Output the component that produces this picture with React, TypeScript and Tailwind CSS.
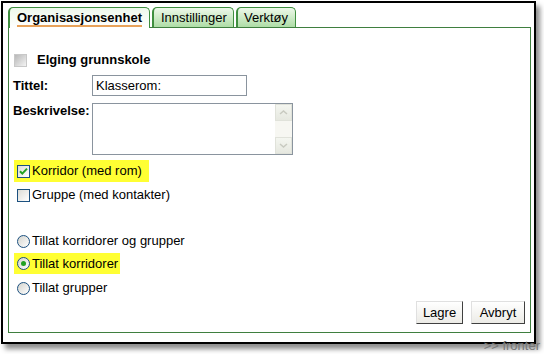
import React from "react";

function Check({ checked }: { checked?: boolean }) {
  return (
    <span className="relative inline-block w-[13px] h-[13px] border border-[#1c5180] bg-gradient-to-br from-[#dcdcd6] to-white shrink-0">
      {checked && (
        <svg viewBox="0 0 11 11" className="absolute left-0 top-0 w-[11px] h-[11px]">
          <path d="M2 5.2 L4.3 7.6 L9 2.6" fill="none" stroke="#21a121" strokeWidth="2" />
        </svg>
      )}
    </span>
  );
}

function Radio({ checked }: { checked?: boolean }) {
  return (
    <span className="relative inline-block w-[13px] h-[13px] rounded-full border border-[#1c5180] bg-gradient-to-br from-[#d4d4ce] to-white shrink-0">
      {checked && (
        <span className="absolute left-[3px] top-[3px] w-[5px] h-[5px] rounded-full bg-[#21a121]" />
      )}
    </span>
  );
}

function Btn({ label, w }: { label: string; w: string }) {
  return (
    <div
      className={`${w} h-[23px] flex items-center justify-center text-[13px] text-black bg-gradient-to-b from-white to-[#ecebe6] border border-t-[#e0e0e0] border-l-[#e0e0e0] border-r-[#404040] border-b-[#404040]`}
    >
      {label}
    </div>
  );
}

export default function App() {
  return (
    <div className="relative w-[544px] h-[354px] bg-white overflow-hidden font-['Liberation_Sans',Arial,sans-serif] text-[13px] text-black whitespace-nowrap">
      <div className="ml-[1px] mt-[1px] w-[535px] h-[343px] border-2 border-black bg-white shadow-[4px_5px_5px_rgba(0,0,0,0.45)] pl-[5px] pt-[4px] flex flex-col">
        {/* tabs */}
        <div className="flex items-end h-[20px] relative z-10">
          <div className="w-[142px] h-[21px] -mb-[1px] rounded-t-[5px] border border-b-0 border-[#3f8f3f] border-l-2 bg-gradient-to-b from-[#eef8ec] to-white flex items-start pl-[7px] pt-[2px]">
            <span className="font-bold leading-[15px] border-b-2 border-[#e8a25a]">Organisasjonsenhet</span>
          </div>
          <div className="ml-[2px] w-[82px] h-[20px] rounded-t-[5px] border border-b-0 border-[#3f8f3f] border-l-2 bg-gradient-to-b from-[#eef8ea] to-[#aedda6] flex items-center pl-[7px]">
            Innstillinger
          </div>
          <div className="ml-[2px] w-[60px] h-[20px] rounded-t-[5px] border border-b-0 border-[#3f8f3f] border-l-2 bg-gradient-to-b from-[#eef8ea] to-[#aedda6] flex items-center pl-[6px]">
            Verktøy
          </div>
        </div>
        {/* panel */}
        <div className="w-[523px] h-[306px] border border-[#3f7f3f] flex flex-col pl-[4px] pr-[4px]">
          <div className="mt-[22px] h-[20px] flex items-center ml-[1px]">
            <span className="inline-block w-[13px] h-[13px] bg-gradient-to-br from-[#b8b8b8] to-[#f4f4f4] border border-[#c8c8c8]" />
            <span className="ml-[10px] font-bold">Elging grunnskole</span>
          </div>
          <div className="mt-[5px] flex items-center h-[21px]">
            <span className="w-[79px] font-bold">Tittel:</span>
            <div className="w-[155px] h-[21px] border border-[#8a949e] flex items-center pl-[3px] text-[13px]">
              Klasserom:
            </div>
          </div>
          <div className="mt-[7px] flex items-start">
            <span className="w-[79px] font-bold leading-[15px]">Beskrivelse:</span>
            <div className="w-[201px] h-[52px] border border-[#8a949e] flex justify-end">
              <div className="w-[17px] h-full bg-[#f7f7f2] flex flex-col justify-between">
                <div className="h-[17px] bg-gradient-to-b from-[#f4f6f0] to-[#e6e8e0] border border-[#e0e2da] flex items-center justify-center">
                  <svg viewBox="0 0 9 5" className="w-[9px] h-[5px]"><path d="M1 4 L4.5 1 L8 4" fill="none" stroke="#c8cac0" strokeWidth="1.5" /></svg>
                </div>
                <div className="h-[17px] bg-gradient-to-b from-[#f4f6f0] to-[#e6e8e0] border border-[#e0e2da] flex items-center justify-center">
                  <svg viewBox="0 0 9 5" className="w-[9px] h-[5px]"><path d="M1 1 L4.5 4 L8 1" fill="none" stroke="#c8cac0" strokeWidth="1.5" /></svg>
                </div>
              </div>
            </div>
          </div>
          <div className="mt-[5px] ml-[1px] self-start h-[22px] bg-[#ffff33] flex items-center pl-[3px] pr-[7px]">
            <Check checked />
            <span className="ml-[2px]">Korridor (med rom)</span>
          </div>
          <div className="mt-[3px] ml-[1px] h-[20px] flex items-center pl-[3px]">
            <Check />
            <span className="ml-[2px]">Gruppe (med kontakter)</span>
          </div>
          <div className="mt-[26px] ml-[1px] h-[20px] flex items-center pl-[3px]">
            <Radio />
            <span className="ml-[2px]">Tillat korridorer og grupper</span>
          </div>
          <div className="mt-[2px] ml-[1px] self-start h-[21px] bg-[#ffff33] flex items-center pl-[3px] pr-[2px]">
            <Radio checked />
            <span className="ml-[2px]">Tillat korridorer</span>
          </div>
          <div className="mt-[4px] ml-[1px] h-[20px] flex items-center pl-[3px]">
            <Radio />
            <span className="ml-[2px]">Tillat grupper</span>
          </div>
          <div className="mt-[3px] flex justify-end gap-[8px] pr-[1px]">
            <Btn label="Lagre" w="w-[47px]" />
            <Btn label="Avbryt" w="w-[54px]" />
          </div>
        </div>
      </div>
      <div className="absolute z-20 right-[4px] bottom-[1px] text-[13px] text-[#777777] leading-[14px]">
        &gt;&gt; fronter
      </div>
    </div>
  );
}
